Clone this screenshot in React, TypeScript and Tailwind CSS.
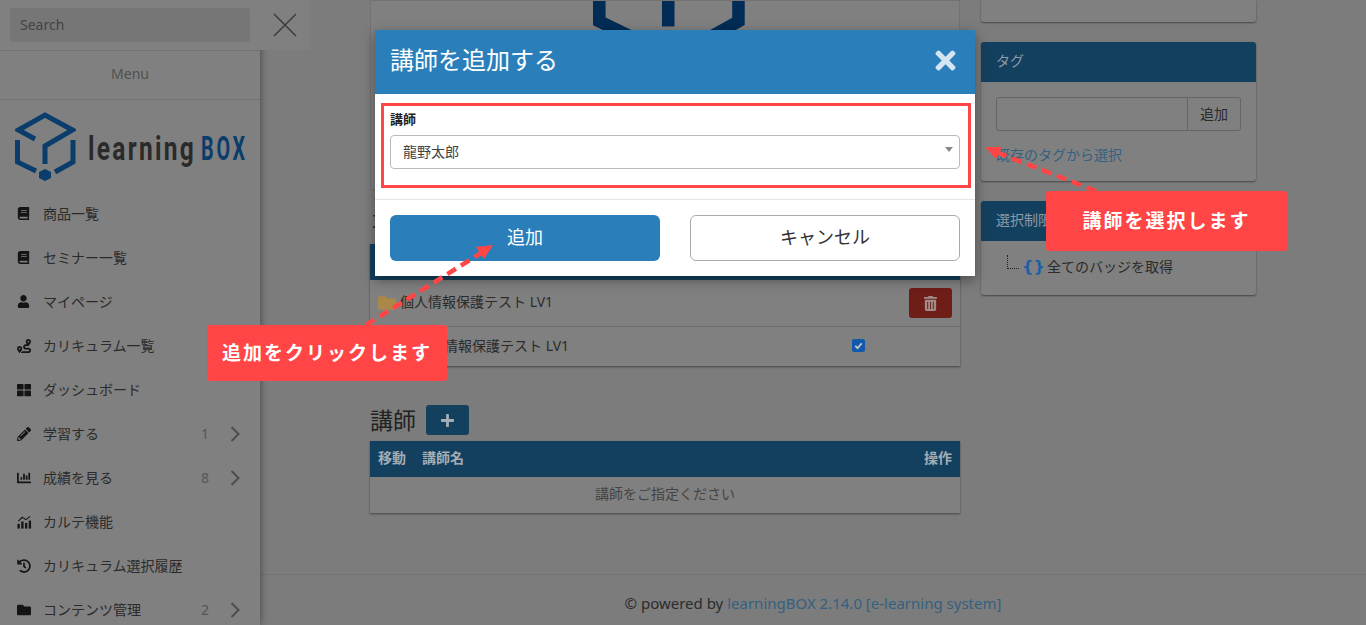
import React from 'react';
import { FaBook, FaUser, FaRoute, FaThLarge, FaPencilAlt, FaChartBar, FaHistory, FaFolder, FaTrashAlt, FaPlus, FaTimes } from 'react-icons/fa';

const CubeMark: React.FC<{ className?: string }> = ({ className }) => (
  <svg viewBox="0 0 61 69" className={className} fill="none">
    <g stroke="currentColor" strokeWidth="5" strokeLinejoin="miter">
      <path d="M20 27 L3.5 18 L30 3 L57.5 18 L30 34 L30 52" />
      <path d="M2.5 28 V50 L21 59" />
      <path d="M58 28 V50 L40 60" />
    </g>
    <polygon points="30,57 36,60 36,66 30,69 24,66 24,60" fill="currentColor" />
  </svg>
);

const KarteIcon = () => (
  <svg viewBox="0 0 16 14" className="w-[15px] h-[14px]" fill="currentColor">
    <rect x="0.5" y="9" width="2.5" height="5" />
    <rect x="4.5" y="6.5" width="2.5" height="7.5" />
    <rect x="8.5" y="8" width="2.5" height="6" />
    <rect x="12.5" y="5.5" width="2.5" height="8.5" />
    <path d="M1.5 6 L5.5 2 L9.5 4.5 L14 1" stroke="currentColor" strokeWidth="1.2" fill="none" />
  </svg>
);

const menuItems: { label: string; icon: React.ReactNode; count?: number }[] = [
  { label: '商品一覧', icon: <FaBook size={13} /> },
  { label: 'セミナー一覧', icon: <FaBook size={13} /> },
  { label: 'マイページ', icon: <FaUser size={13} /> },
  { label: 'カリキュラム一覧', icon: <FaRoute size={14} /> },
  { label: 'ダッシュボード', icon: <FaThLarge size={14} /> },
  { label: '学習する', icon: <FaPencilAlt size={14} />, count: 1 },
  { label: '成績を見る', icon: <FaChartBar size={14} />, count: 8 },
  { label: 'カルテ機能', icon: <KarteIcon /> },
  { label: 'カリキュラム選択履歴', icon: <FaHistory size={14} /> },
  { label: 'コンテンツ管理', icon: <FaFolder size={14} />, count: 2 },
];

const Chevron = () => (
  <svg viewBox="0 0 10 16" className="w-[10px] h-[16px]" fill="none" stroke="#4d4d4d" strokeWidth="2">
    <path d="M1.5 1 L8.5 8 L1.5 15" />
  </svg>
);

const Sidebar = () => (
  <aside className="w-[260px] h-full shrink-0 bg-[#808080] shadow-[0_0_8px_rgba(0,0,0,0.45)] flex flex-col z-10 overflow-hidden">
    <div className="h-[51px] shrink-0 px-[10px] pt-2 border-b border-[#727272]">
      <div className="h-[34px] bg-[#767676] rounded-[3px] px-[10px] flex items-center text-sm text-[#444]">Search</div>
    </div>
    <div className="h-[49px] shrink-0 flex items-center justify-center border-b border-[#727272] pb-[2px] text-sm text-[#505050]">Menu</div>
    <div className="h-[92px] shrink-0 flex items-start pl-[15px] pt-[12px]">
      <CubeMark className="w-[61px] h-[69px] shrink-0 text-[#0a3d6b]" />
      <svg viewBox="0 0 160 50" className="w-[160px] h-[50px] ml-[12px] mt-[12px] shrink-0">
        <g transform="scale(0.72 1)">
          <text x="0" y="36" fontSize="34" fontWeight="700" fill="#2a2a2a" textLength="147" lengthAdjust="spacing" fontFamily="Roboto, sans-serif">learning</text>
        </g>
        <g transform="translate(113 0) scale(0.58 1)">
          <text x="0" y="36" fontSize="34" fontWeight="700" fill="#0a3d6b" textLength="76" lengthAdjust="spacing" fontFamily="Roboto, sans-serif">BOX</text>
        </g>
      </svg>
    </div>
    <nav className="flex flex-col">
      {menuItems.map((item) => (
        <div key={item.label} className="h-[44px] shrink-0 flex items-center pl-[17px] pr-[20px] pb-px text-sm text-[#2b2b2b]">
          <span className="w-[26px] shrink-0 flex items-center text-[#151515]">{item.icon}</span>
          <span className="flex-1">{item.label}</span>
          {item.count !== undefined && (
            <>
              <span className="text-[#555] mr-[21px]">{item.count}</span>
              <Chevron />
            </>
          )}
        </div>
      ))}
    </nav>
  </aside>
);

const Card: React.FC<{ title: string; children: React.ReactNode }> = ({ title, children }) => (
  <div className="rounded-[3px] bg-[#808080] shadow-[0_1px_2px_rgba(0,0,0,0.45)] overflow-hidden">
    <div className="h-10 bg-[#144060] flex items-center px-[15px] pb-[2px] text-sm text-[#8b9aa5]">{title}</div>
    {children}
  </div>
);

const MainContent = () => (
  <div className="flex-1 min-h-0 flex gap-[21px] pl-[110px]">
    <div className="w-[590px] shrink-0 flex flex-col">
      <div className="h-[190px] shrink-0 bg-[#808080] border border-[#727272] flex justify-center overflow-hidden">
        <CubeMark className="w-[153px] h-[173px] shrink-0 -mt-[105px] ml-[9px] text-[#002c55]" />
      </div>
      <h2 className="text-xl leading-[28px] text-[#222] mt-[18px] h-[36px]">コンテンツ</h2>
      <div className="bg-[#808080] shadow-[0_1px_2px_rgba(0,0,0,0.45)]">
        <div className="h-[36px] bg-[#144060]" />
        <div className="h-[47px] flex items-center border-b border-[#6f6f6f] pl-2 pr-2 text-sm text-[#2b2b2b]">
          <FaFolder size={18} className="text-[#a98848] mr-[4px] shrink-0" />
          <span className="flex-1 pb-[2px]">個人情報保護テスト LV1</span>
          <div className="w-[43px] h-[30px] bg-[#6f1d17] rounded-[3px] flex items-center justify-center text-[#a08c8a]">
            <FaTrashAlt size={15} />
          </div>
        </div>
        <div className="h-[39px] flex items-center pl-[46px] pb-[2px] text-sm text-[#2b2b2b]">
          <span className="w-[436px] shrink-0">個人情報保護テスト LV1</span>
          <span className="w-[13px] h-[13px] rounded-[2px] bg-[#1259ad] flex items-center justify-center">
            <svg viewBox="0 0 12 12" className="w-[11px] h-[11px]" fill="none" stroke="#c8c8c8" strokeWidth="2">
              <path d="M2.5 6.5 L5 9 L9.5 3.5" />
            </svg>
          </span>
        </div>
      </div>
      <div className="flex items-center gap-[10px] mt-[39px] mb-[5px] h-[31px] pb-[1px]">
        <h2 className="text-[23px] leading-none text-[#222]">講師</h2>
        <div className="w-[43px] h-[30px] rounded-[3px] bg-[#144060] flex items-center justify-center text-[#a3adb4]">
          <FaPlus size={15} />
        </div>
      </div>
      <div className="bg-[#808080] shadow-[0_1px_2px_rgba(0,0,0,0.45)]">
        <div className="h-[36px] bg-[#144060] flex items-center px-2 pb-[2px] text-sm font-bold text-[#a3adb4]">
          <span className="w-[44px]">移動</span>
          <span className="flex-1">講師名</span>
          <span>操作</span>
        </div>
        <div className="h-[36px] flex items-center justify-center pb-[2px] text-sm text-[#444]">講師をご指定ください</div>
      </div>
    </div>
    <div className="w-[275px] shrink-0 flex flex-col gap-5">
      <div className="h-[22px] shrink-0 rounded-b-[3px] bg-[#808080] shadow-[0_1px_2px_rgba(0,0,0,0.45)]" />
      <Card title="タグ">
        <div className="px-[15px] pt-[15px] pb-[16px]">
          <div className="h-[34px] flex border border-[#656565] rounded-[3px]">
            <div className="flex-1" />
            <div className="w-[53px] border-l border-[#656565] flex items-center justify-center text-sm text-[#2b2b2b]">追加</div>
          </div>
          <a className="block mt-[14px] text-sm leading-[20px] text-[#35607f]">既存のタグから選択</a>
        </div>
      </Card>
      <Card title="選択制限">
        <div className="h-[54px] flex items-center pl-[26px] pb-[2px] text-sm text-[#2b2b2b]">
          <span className="w-[12px] h-[14px] -mt-[10px] border-l border-b border-dotted border-[#222]" />
          <span className="ml-[3px] w-[22px] text-base font-bold font-['DejaVu_Sans',sans-serif] text-[#1c5fa8]">{'{}'}</span>
          <span className="ml-[3px]">全てのバッジを取得</span>
        </div>
      </Card>
    </div>
  </div>
);

const Modal = () => (
  <div className="absolute left-[375px] top-[30px] w-[600px] bg-white shadow-[0_4px_12px_rgba(0,0,0,0.4)] z-20">
    <div className="h-16 bg-[#2a7fba] flex items-center justify-between pl-[15px] pr-[15px] pb-1 text-white">
      <h3 className="text-2xl">講師を追加する</h3>
      <FaTimes size={29} className="text-[#d4e5f1]" />
    </div>
    <div className="h-[106px] px-[15px] pt-[16px] border-b border-[#e5e5e5]">
      <div className="text-[13px] leading-[18px] font-bold text-[#222]">講師</div>
      <div className="mt-[7px] h-[34px] border border-[#bbb] rounded-[4px] flex items-center justify-between pl-3 pr-[6px] text-sm text-[#444]">
        <span>龍野太郎</span>
        <span className="w-0 h-0 -mt-[6px] border-l-[4px] border-r-[4px] border-t-[5px] border-l-transparent border-r-transparent border-t-[#888]" />
      </div>
    </div>
    <div className="h-[76px] flex justify-between px-[15px] pt-[15px]">
      <button className="w-[270px] h-[46px] bg-[#2a7fba] rounded-[6px] pb-[3px] text-lg text-white">追加</button>
      <button className="w-[270px] h-[46px] bg-white border border-[#aaa] rounded-[6px] pb-[3px] text-lg text-[#333]">キャンセル</button>
    </div>
  </div>
);

const Annotations = () => (
  <>
    <div className="absolute left-[381px] top-[103px] w-[590px] h-[85px] border-[3px] border-[#ff4545] z-30" />
    <svg className="absolute inset-0 w-[1366px] h-[625px] z-30 pointer-events-none" viewBox="0 0 1366 625">
      <g stroke="#ff4545" strokeWidth="4.5" strokeDasharray="10 6" fill="none">
        <path d="M366 325 L481 253" />
        <path d="M1096 191 L996 152" />
      </g>
      <polygon points="493,245 484,259 476,247" fill="#ff4545" />
      <polygon points="985,147 1002,147 996,159" fill="#ff4545" />
    </svg>
    <div className="absolute left-[207px] top-[325px] w-[240px] h-[56px] bg-[#ff4545] rounded-[3px] flex items-center justify-center text-[19px] font-bold tracking-[2px] text-white z-30">追加をクリックします</div>
    <div className="absolute left-[1046px] top-[191px] w-[241px] h-[60px] bg-[#ff4545] rounded-[3px] flex items-center justify-center text-[19px] font-bold tracking-[2px] text-white z-30">講師を選択します</div>
  </>
);

export default function App() {
  return (
    <div className="relative w-[1366px] h-[625px] overflow-hidden flex bg-[#7c7c7c] font-['Noto_Sans','Noto_Sans_CJK_JP',sans-serif]">
      <Sidebar />
      <div className="relative flex-1 min-w-0 flex flex-col">
        <div className="absolute left-0 top-0 w-[50px] h-[50px] bg-[#808080] flex items-center justify-center z-10">
          <svg viewBox="0 0 24 24" className="w-[24px] h-[24px]" stroke="#3c3c3c" strokeWidth="1.5" fill="none">
            <path d="M1 1 L23 23 M23 1 L1 23" />
          </svg>
        </div>
        <MainContent />
        <footer className="h-[51px] shrink-0 border-t border-[#727272] flex items-center justify-center pt-[6px] text-[15px] text-[#2b2b2b]">
          <span>© powered by <a className="text-[#35607f]">learningBOX 2.14.0 [e-learning system]</a></span>
        </footer>
      </div>
      <Modal />
      <Annotations />
    </div>
  );
}
